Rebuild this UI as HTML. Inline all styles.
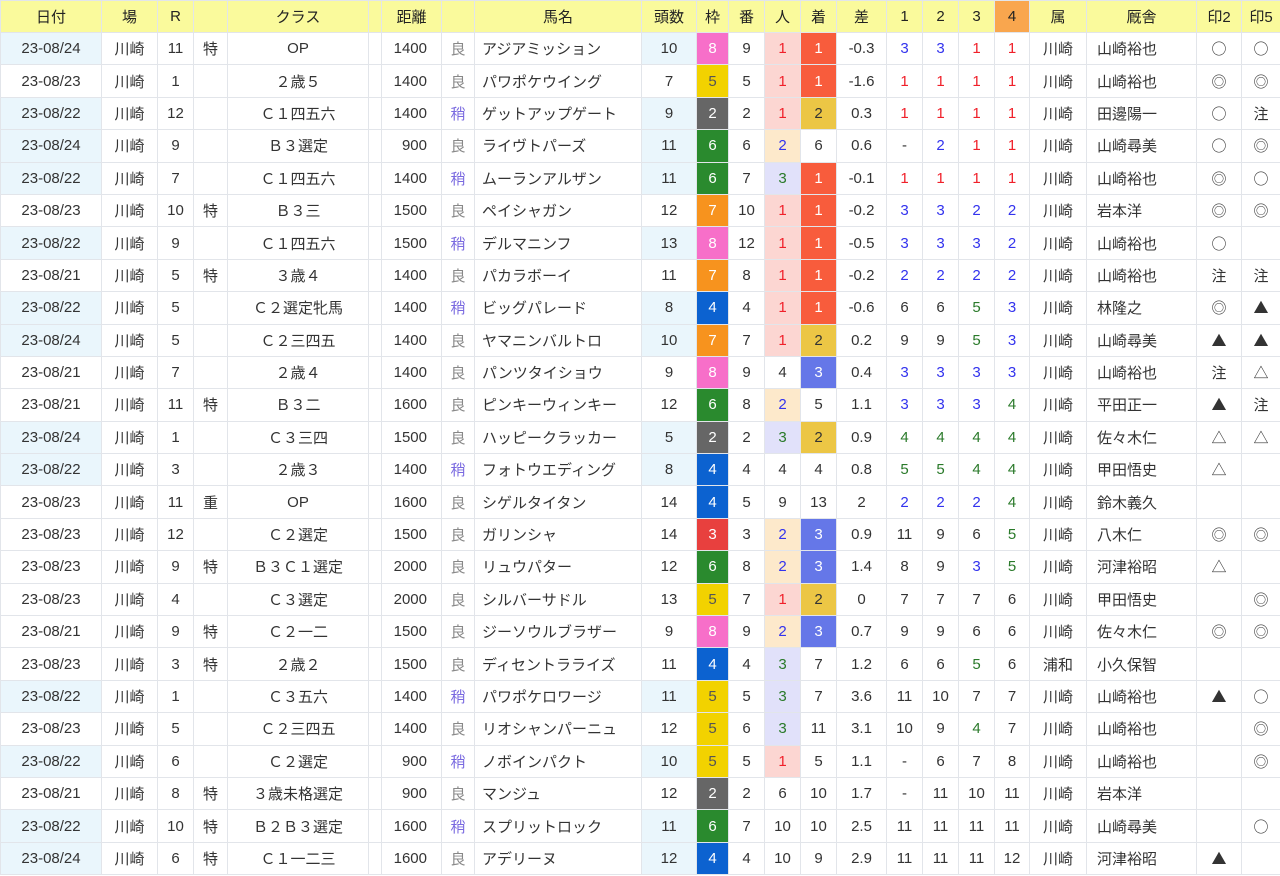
<!DOCTYPE html>
<html><head><meta charset="utf-8"><style>
html,body{margin:0;padding:0;background:#fff;}
table{border-collapse:collapse;table-layout:fixed;width:1280px;font-family:"Liberation Sans","Noto Sans CJK JP",sans-serif;font-size:15px;color:#333;}
td,th{border:1px solid #e2e5ea;text-align:center;padding:0;height:31.4px;white-space:nowrap;overflow:hidden;}
th{background:#fafa9c;font-weight:normal;height:31px;color:#222;}
.bl{background:#eaf6fc;}
td.ds{text-align:right;padding-right:14px;}
td.nm{text-align:left;padding-left:7px;}
td.jk{text-align:left;padding-left:10px;}
td.mk{font-family:"Noto Sans CJK JP",sans-serif;font-size:15px;}
.ry{color:#888;}.sy{color:#7a6ae0;}
.r{color:#f0202a;}.b{color:#3333ee;}.g{color:#2a7a2a;}
.n1{background:#fcd6d2;}.n2{background:#fde9cb;}.n3{background:#e1e1fa;}
.c1{background:#f85c3c;color:#fff;}.c2{background:#ecc645;}.c3{background:#6577e8;color:#fff;}
.w2{background:#666;color:#fff;}.w3{background:#e8403e;color:#fff;}.w4{background:#0c62d0;color:#fff;}.w5{background:#f2d200;color:#555;}.w6{background:#2a8a2e;color:#fff;}.w7{background:#f7931e;color:#fff;}.w8{background:#f76fc9;color:#fff;}
</style></head><body>
<table>
<colgroup><col style="width:101px"><col style="width:56px"><col style="width:36px"><col style="width:34px"><col style="width:141px"><col style="width:13px"><col style="width:60px"><col style="width:33px"><col style="width:167px"><col style="width:55px"><col style="width:32px"><col style="width:36px"><col style="width:36px"><col style="width:36px"><col style="width:50px"><col style="width:36px"><col style="width:36px"><col style="width:36px"><col style="width:35px"><col style="width:57px"><col style="width:110px"><col style="width:45px"><col style="width:39px"></colgroup>
<tr><th>日付</th><th>場</th><th>R</th><th></th><th>クラス</th><th></th><th>距離</th><th></th><th>馬名</th><th>頭数</th><th>枠</th><th>番</th><th>人</th><th>着</th><th>差</th><th>1</th><th>2</th><th>3</th><th style="background:#f9a64e">4</th><th>属</th><th>厩舎</th><th>印2</th><th>印5</th></tr>
<tr><td class="bl">23-08/24</td><td>川崎</td><td>11</td><td>特</td><td>OP</td><td></td><td class="ds">1400</td><td class="ry">良</td><td class="nm">アジアミッション</td><td class="bl">10</td><td class="w8">8</td><td>9</td><td class="n1 r">1</td><td class="c1">1</td><td>-0.3</td><td class="b">3</td><td class="b">3</td><td class="r">1</td><td class="r">1</td><td>川崎</td><td class="jk">山崎裕也</td><td class="mk">○</td><td class="mk">○</td></tr>
<tr><td>23-08/23</td><td>川崎</td><td>1</td><td></td><td>２歳５</td><td></td><td class="ds">1400</td><td class="ry">良</td><td class="nm">パワポケウイング</td><td>7</td><td class="w5">5</td><td>5</td><td class="n1 r">1</td><td class="c1">1</td><td>-1.6</td><td class="r">1</td><td class="r">1</td><td class="r">1</td><td class="r">1</td><td>川崎</td><td class="jk">山崎裕也</td><td class="mk">◎</td><td class="mk">◎</td></tr>
<tr><td class="bl">23-08/22</td><td>川崎</td><td>12</td><td></td><td>Ｃ１四五六</td><td></td><td class="ds">1400</td><td class="sy">稍</td><td class="nm">ゲットアップゲート</td><td class="bl">9</td><td class="w2">2</td><td>2</td><td class="n1 r">1</td><td class="c2">2</td><td>0.3</td><td class="r">1</td><td class="r">1</td><td class="r">1</td><td class="r">1</td><td>川崎</td><td class="jk">田邊陽一</td><td class="mk">○</td><td class="mk">注</td></tr>
<tr><td class="bl">23-08/24</td><td>川崎</td><td>9</td><td></td><td>Ｂ３選定</td><td></td><td class="ds">900</td><td class="ry">良</td><td class="nm">ライヴトパーズ</td><td class="bl">11</td><td class="w6">6</td><td>6</td><td class="n2 b">2</td><td>6</td><td>0.6</td><td>-</td><td class="b">2</td><td class="r">1</td><td class="r">1</td><td>川崎</td><td class="jk">山崎尋美</td><td class="mk">○</td><td class="mk">◎</td></tr>
<tr><td class="bl">23-08/22</td><td>川崎</td><td>7</td><td></td><td>Ｃ１四五六</td><td></td><td class="ds">1400</td><td class="sy">稍</td><td class="nm">ムーランアルザン</td><td class="bl">11</td><td class="w6">6</td><td>7</td><td class="n3 g">3</td><td class="c1">1</td><td>-0.1</td><td class="r">1</td><td class="r">1</td><td class="r">1</td><td class="r">1</td><td>川崎</td><td class="jk">山崎裕也</td><td class="mk">◎</td><td class="mk">○</td></tr>
<tr><td>23-08/23</td><td>川崎</td><td>10</td><td>特</td><td>Ｂ３三</td><td></td><td class="ds">1500</td><td class="ry">良</td><td class="nm">ペイシャガン</td><td>12</td><td class="w7">7</td><td>10</td><td class="n1 r">1</td><td class="c1">1</td><td>-0.2</td><td class="b">3</td><td class="b">3</td><td class="b">2</td><td class="b">2</td><td>川崎</td><td class="jk">岩本洋</td><td class="mk">◎</td><td class="mk">◎</td></tr>
<tr><td class="bl">23-08/22</td><td>川崎</td><td>9</td><td></td><td>Ｃ１四五六</td><td></td><td class="ds">1500</td><td class="sy">稍</td><td class="nm">デルマニンフ</td><td class="bl">13</td><td class="w8">8</td><td>12</td><td class="n1 r">1</td><td class="c1">1</td><td>-0.5</td><td class="b">3</td><td class="b">3</td><td class="b">3</td><td class="b">2</td><td>川崎</td><td class="jk">山崎裕也</td><td class="mk">○</td><td></td></tr>
<tr><td>23-08/21</td><td>川崎</td><td>5</td><td>特</td><td>３歳４</td><td></td><td class="ds">1400</td><td class="ry">良</td><td class="nm">パカラボーイ</td><td>11</td><td class="w7">7</td><td>8</td><td class="n1 r">1</td><td class="c1">1</td><td>-0.2</td><td class="b">2</td><td class="b">2</td><td class="b">2</td><td class="b">2</td><td>川崎</td><td class="jk">山崎裕也</td><td class="mk">注</td><td class="mk">注</td></tr>
<tr><td class="bl">23-08/22</td><td>川崎</td><td>5</td><td></td><td>Ｃ２選定牝馬</td><td></td><td class="ds">1400</td><td class="sy">稍</td><td class="nm">ビッグパレード</td><td class="bl">8</td><td class="w4">4</td><td>4</td><td class="n1 r">1</td><td class="c1">1</td><td>-0.6</td><td>6</td><td>6</td><td class="g">5</td><td class="b">3</td><td>川崎</td><td class="jk">林隆之</td><td class="mk">◎</td><td class="mk">▲</td></tr>
<tr><td class="bl">23-08/24</td><td>川崎</td><td>5</td><td></td><td>Ｃ２三四五</td><td></td><td class="ds">1400</td><td class="ry">良</td><td class="nm">ヤマニンバルトロ</td><td class="bl">10</td><td class="w7">7</td><td>7</td><td class="n1 r">1</td><td class="c2">2</td><td>0.2</td><td>9</td><td>9</td><td class="g">5</td><td class="b">3</td><td>川崎</td><td class="jk">山崎尋美</td><td class="mk">▲</td><td class="mk">▲</td></tr>
<tr><td>23-08/21</td><td>川崎</td><td>7</td><td></td><td>２歳４</td><td></td><td class="ds">1400</td><td class="ry">良</td><td class="nm">パンツタイショウ</td><td>9</td><td class="w8">8</td><td>9</td><td>4</td><td class="c3">3</td><td>0.4</td><td class="b">3</td><td class="b">3</td><td class="b">3</td><td class="b">3</td><td>川崎</td><td class="jk">山崎裕也</td><td class="mk">注</td><td class="mk">△</td></tr>
<tr><td>23-08/21</td><td>川崎</td><td>11</td><td>特</td><td>Ｂ３二</td><td></td><td class="ds">1600</td><td class="ry">良</td><td class="nm">ピンキーウィンキー</td><td>12</td><td class="w6">6</td><td>8</td><td class="n2 b">2</td><td>5</td><td>1.1</td><td class="b">3</td><td class="b">3</td><td class="b">3</td><td class="g">4</td><td>川崎</td><td class="jk">平田正一</td><td class="mk">▲</td><td class="mk">注</td></tr>
<tr><td class="bl">23-08/24</td><td>川崎</td><td>1</td><td></td><td>Ｃ３三四</td><td></td><td class="ds">1500</td><td class="ry">良</td><td class="nm">ハッピークラッカー</td><td class="bl">5</td><td class="w2">2</td><td>2</td><td class="n3 g">3</td><td class="c2">2</td><td>0.9</td><td class="g">4</td><td class="g">4</td><td class="g">4</td><td class="g">4</td><td>川崎</td><td class="jk">佐々木仁</td><td class="mk">△</td><td class="mk">△</td></tr>
<tr><td class="bl">23-08/22</td><td>川崎</td><td>3</td><td></td><td>２歳３</td><td></td><td class="ds">1400</td><td class="sy">稍</td><td class="nm">フォトウエディング</td><td class="bl">8</td><td class="w4">4</td><td>4</td><td>4</td><td>4</td><td>0.8</td><td class="g">5</td><td class="g">5</td><td class="g">4</td><td class="g">4</td><td>川崎</td><td class="jk">甲田悟史</td><td class="mk">△</td><td></td></tr>
<tr><td>23-08/23</td><td>川崎</td><td>11</td><td>重</td><td>OP</td><td></td><td class="ds">1600</td><td class="ry">良</td><td class="nm">シゲルタイタン</td><td>14</td><td class="w4">4</td><td>5</td><td>9</td><td>13</td><td>2</td><td class="b">2</td><td class="b">2</td><td class="b">2</td><td class="g">4</td><td>川崎</td><td class="jk">鈴木義久</td><td></td><td></td></tr>
<tr><td>23-08/23</td><td>川崎</td><td>12</td><td></td><td>Ｃ２選定</td><td></td><td class="ds">1500</td><td class="ry">良</td><td class="nm">ガリンシャ</td><td>14</td><td class="w3">3</td><td>3</td><td class="n2 b">2</td><td class="c3">3</td><td>0.9</td><td>11</td><td>9</td><td>6</td><td class="g">5</td><td>川崎</td><td class="jk">八木仁</td><td class="mk">◎</td><td class="mk">◎</td></tr>
<tr><td>23-08/23</td><td>川崎</td><td>9</td><td>特</td><td>Ｂ３Ｃ１選定</td><td></td><td class="ds">2000</td><td class="ry">良</td><td class="nm">リュウパター</td><td>12</td><td class="w6">6</td><td>8</td><td class="n2 b">2</td><td class="c3">3</td><td>1.4</td><td>8</td><td>9</td><td class="b">3</td><td class="g">5</td><td>川崎</td><td class="jk">河津裕昭</td><td class="mk">△</td><td></td></tr>
<tr><td>23-08/23</td><td>川崎</td><td>4</td><td></td><td>Ｃ３選定</td><td></td><td class="ds">2000</td><td class="ry">良</td><td class="nm">シルバーサドル</td><td>13</td><td class="w5">5</td><td>7</td><td class="n1 r">1</td><td class="c2">2</td><td>0</td><td>7</td><td>7</td><td>7</td><td>6</td><td>川崎</td><td class="jk">甲田悟史</td><td></td><td class="mk">◎</td></tr>
<tr><td>23-08/21</td><td>川崎</td><td>9</td><td>特</td><td>Ｃ２一二</td><td></td><td class="ds">1500</td><td class="ry">良</td><td class="nm">ジーソウルブラザー</td><td>9</td><td class="w8">8</td><td>9</td><td class="n2 b">2</td><td class="c3">3</td><td>0.7</td><td>9</td><td>9</td><td>6</td><td>6</td><td>川崎</td><td class="jk">佐々木仁</td><td class="mk">◎</td><td class="mk">◎</td></tr>
<tr><td>23-08/23</td><td>川崎</td><td>3</td><td>特</td><td>２歳２</td><td></td><td class="ds">1500</td><td class="ry">良</td><td class="nm">ディセントラライズ</td><td>11</td><td class="w4">4</td><td>4</td><td class="n3 g">3</td><td>7</td><td>1.2</td><td>6</td><td>6</td><td class="g">5</td><td>6</td><td>浦和</td><td class="jk">小久保智</td><td></td><td></td></tr>
<tr><td class="bl">23-08/22</td><td>川崎</td><td>1</td><td></td><td>Ｃ３五六</td><td></td><td class="ds">1400</td><td class="sy">稍</td><td class="nm">パワポケロワージ</td><td class="bl">11</td><td class="w5">5</td><td>5</td><td class="n3 g">3</td><td>7</td><td>3.6</td><td>11</td><td>10</td><td>7</td><td>7</td><td>川崎</td><td class="jk">山崎裕也</td><td class="mk">▲</td><td class="mk">○</td></tr>
<tr><td>23-08/23</td><td>川崎</td><td>5</td><td></td><td>Ｃ２三四五</td><td></td><td class="ds">1400</td><td class="ry">良</td><td class="nm">リオシャンパーニュ</td><td>12</td><td class="w5">5</td><td>6</td><td class="n3 g">3</td><td>11</td><td>3.1</td><td>10</td><td>9</td><td class="g">4</td><td>7</td><td>川崎</td><td class="jk">山崎裕也</td><td></td><td class="mk">◎</td></tr>
<tr><td class="bl">23-08/22</td><td>川崎</td><td>6</td><td></td><td>Ｃ２選定</td><td></td><td class="ds">900</td><td class="sy">稍</td><td class="nm">ノボインパクト</td><td class="bl">10</td><td class="w5">5</td><td>5</td><td class="n1 r">1</td><td>5</td><td>1.1</td><td>-</td><td>6</td><td>7</td><td>8</td><td>川崎</td><td class="jk">山崎裕也</td><td></td><td class="mk">◎</td></tr>
<tr><td>23-08/21</td><td>川崎</td><td>8</td><td>特</td><td>３歳未格選定</td><td></td><td class="ds">900</td><td class="ry">良</td><td class="nm">マンジュ</td><td>12</td><td class="w2">2</td><td>2</td><td>6</td><td>10</td><td>1.7</td><td>-</td><td>11</td><td>10</td><td>11</td><td>川崎</td><td class="jk">岩本洋</td><td></td><td></td></tr>
<tr><td class="bl">23-08/22</td><td>川崎</td><td>10</td><td>特</td><td>Ｂ２Ｂ３選定</td><td></td><td class="ds">1600</td><td class="sy">稍</td><td class="nm">スプリットロック</td><td class="bl">11</td><td class="w6">6</td><td>7</td><td>10</td><td>10</td><td>2.5</td><td>11</td><td>11</td><td>11</td><td>11</td><td>川崎</td><td class="jk">山崎尋美</td><td></td><td class="mk">○</td></tr>
<tr><td class="bl">23-08/24</td><td>川崎</td><td>6</td><td>特</td><td>Ｃ１一二三</td><td></td><td class="ds">1600</td><td class="ry">良</td><td class="nm">アデリーヌ</td><td class="bl">12</td><td class="w4">4</td><td>4</td><td>10</td><td>9</td><td>2.9</td><td>11</td><td>11</td><td>11</td><td>12</td><td>川崎</td><td class="jk">河津裕昭</td><td class="mk">▲</td><td></td></tr>
</table>
</body></html>
